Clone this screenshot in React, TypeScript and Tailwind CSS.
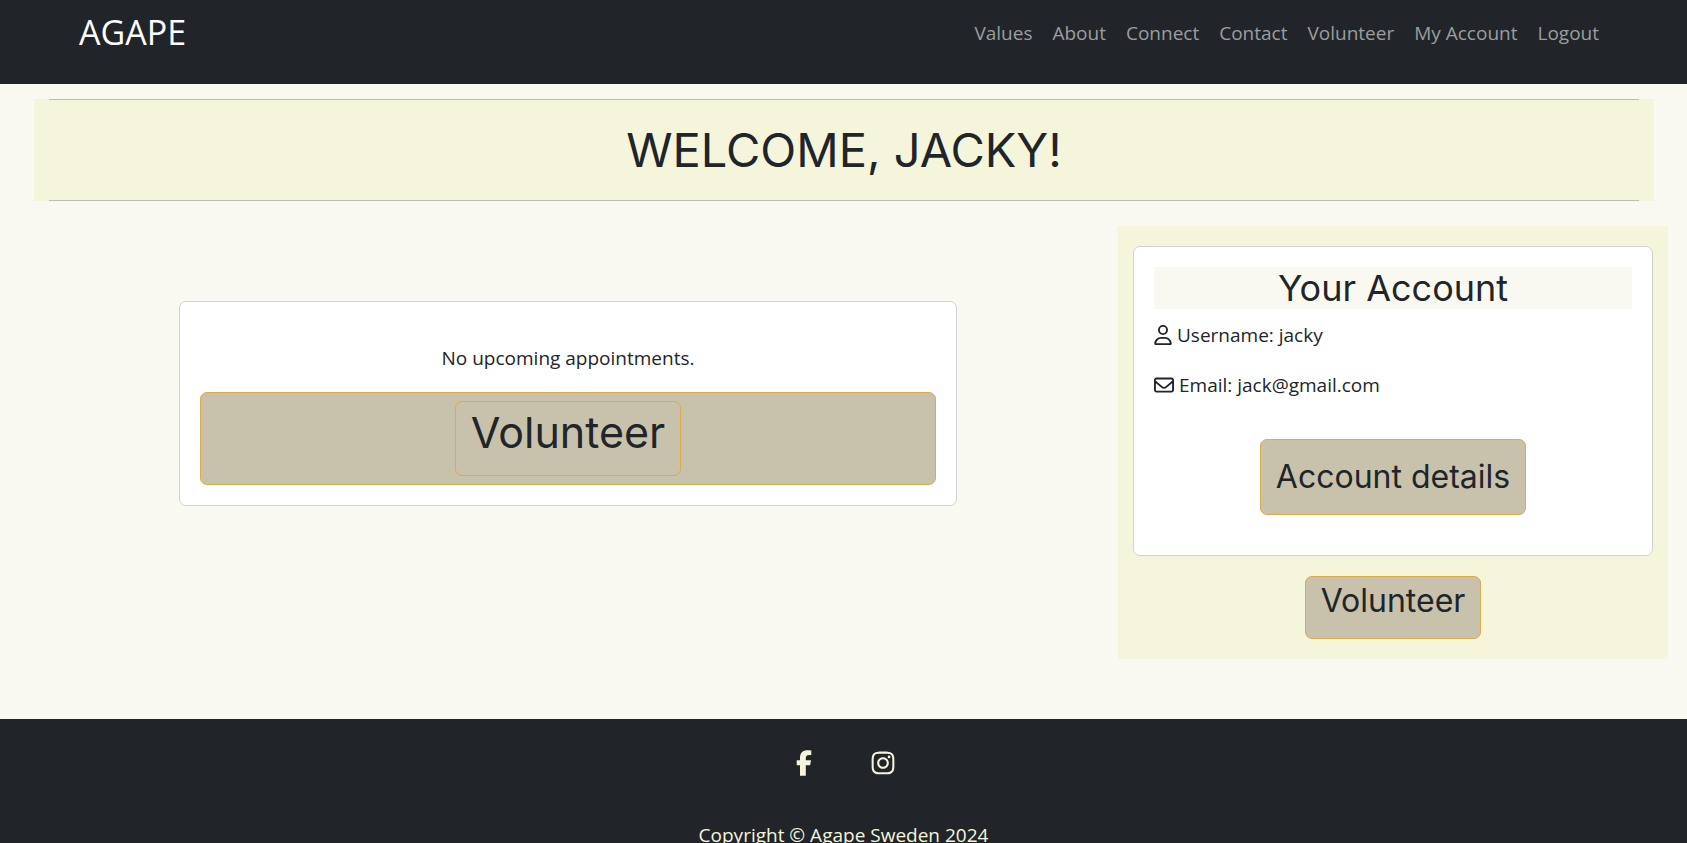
import { FaFacebookF, FaInstagram, FaRegEnvelope, FaRegUser } from "react-icons/fa6";

const links = ["Values", "About", "Connect", "Contact", "Volunteer", "My Account", "Logout"];

const heading = "font-['Inter',sans-serif] font-normal";
const buttonBase = "rounded-[7px] border border-[#e0a94a] bg-[#c8c2ac] text-[#212529]";

function Header() {
  return (
    <header className="flex h-[84px] items-start justify-between bg-[#212529] pr-[78px] pl-[79px]">
      <a href="#" className="pt-[7px] text-[34px] leading-[50px] text-white">
        AGAPE
      </a>
      <nav aria-label="Main" className="pt-[18px]">
        <ul className="flex">
          {links.map((link) => (
            <li key={link}>
              <a href="#" className="block px-[10px] text-[19px] leading-[30px] text-[#9b9d9f]">
                {link}
              </a>
            </li>
          ))}
        </ul>
      </nav>
    </header>
  );
}

function Appointments() {
  return (
    <section className="px-[161px] pt-[75px]">
      <div className="rounded-[7px] border border-[#d2d2d4] bg-white p-5 text-center">
        <p className="pt-[21px] pb-[19px] text-[19px] leading-[30px]">No upcoming appointments.</p>
        <div className={`${buttonBase} flex justify-center p-2`}>
          <button type="button" className={`${buttonBase} ${heading} px-[15px] pt-[7px] pb-5 text-[43px] leading-[46px]`}>
            Volunteer
          </button>
        </div>
      </div>
    </section>
  );
}

function Account() {
  return (
    <aside className="flex flex-col items-center bg-[#f5f5dc] px-[15px] py-5">
      <div className="flex w-full flex-col rounded-[7px] border border-[#d2d2d4] bg-white p-5">
        <h2 className={`${heading} bg-[#f9f9f2] text-center text-[36px] leading-[42px]`}>Your Account</h2>
        <p className="flex items-center gap-[5px] pt-[11px] text-[19px] leading-[30px]">
          <FaRegUser size={20} className="w-[18px]" />
          Username: jacky
        </p>
        <p className="flex items-center gap-[5px] pt-5 text-[19px] leading-[30px]">
          <FaRegEnvelope size={20} />
          Email: jack@gmail.com
        </p>
        <button
          type="button"
          className={`${buttonBase} ${heading} mt-[39px] mb-5 self-center px-[15px] py-5 text-[32px] leading-[34px]`}
        >
          Account details
        </button>
      </div>
      <button type="button" className={`${buttonBase} ${heading} mt-5 px-[15px] pt-[7px] pb-5 text-[32px] leading-[34px]`}>
        Volunteer
      </button>
    </aside>
  );
}

function Footer() {
  return (
    <footer className="bg-[#212529] pt-[31px] pb-5 text-center text-[#f5f5dc]">
      <div className="flex justify-center gap-[58px] pl-1">
        <a href="#" aria-label="Facebook">
          <FaFacebookF size={26} className="w-4" />
        </a>
        <a href="#" aria-label="Instagram">
          <FaInstagram size={26} />
        </a>
      </div>
      <p className="pt-11 text-[19px] leading-[30px]">Copyright © Agape Sweden 2024</p>
    </footer>
  );
}

export default function App() {
  return (
    <div className="bg-[#f9f9f2] font-['Open_Sans','Noto_Sans',sans-serif] text-[#212529]">
      <Header />
      <main className="pt-[15px] pr-[19px] pb-[60px] pl-[18px]">
        <div className="mr-[14px] ml-4 bg-[#f5f5dc] px-[15px]">
          <h1 className={`${heading} border-y border-[#bdbeae] py-5 text-center text-[47px] leading-[60px]`}>
            WELCOME, JACKY!
          </h1>
        </div>
        <div className="mt-[25px] grid grid-cols-[2fr_1fr]">
          <Appointments />
          <Account />
        </div>
      </main>
      <Footer />
    </div>
  );
}
